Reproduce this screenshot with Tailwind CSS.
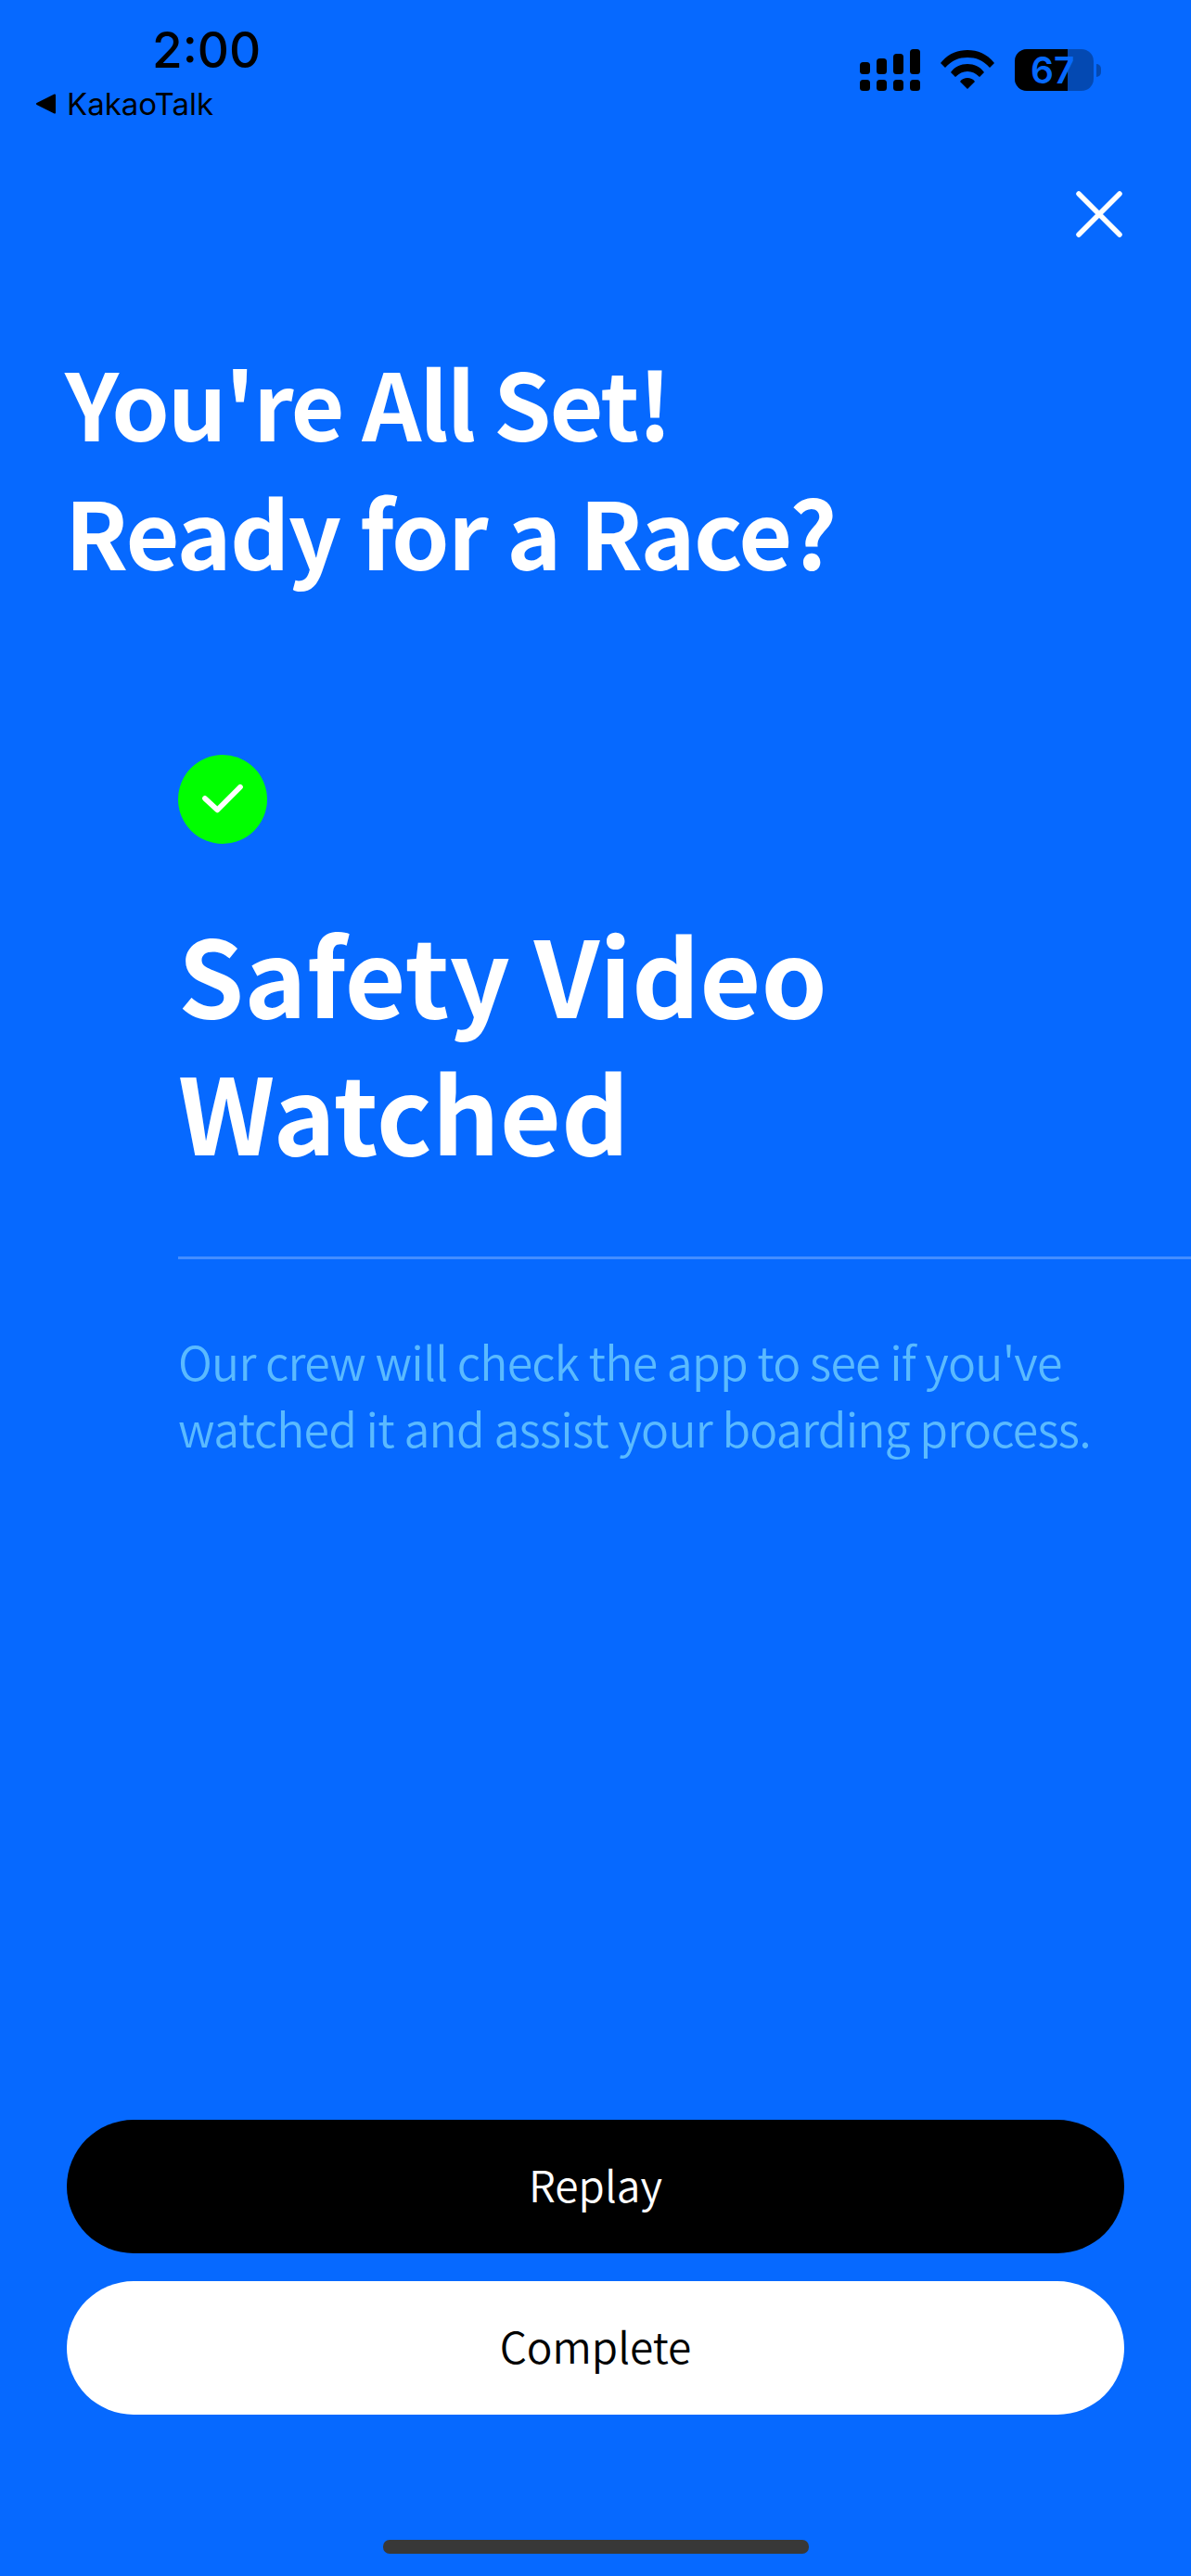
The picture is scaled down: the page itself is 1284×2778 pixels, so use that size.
<!DOCTYPE html>
<html lang="en">
<head>
  <meta charset="UTF-8">
  <meta name="viewport" content="width=device-width, initial-scale=1.0">
  <title>Safety Video Watched</title>
  <script src="https://cdn.jsdelivr.net/npm/@tailwindcss/browser@4"></script>
</head>
<body class="bg-[#0669ff]">
  <div class="w-[1284px] h-[2778px] flex flex-col overflow-hidden font-['Noto_Sans_CJK_KR','Noto_Sans',sans-serif]">

    <!-- status bar -->
    <div class="h-[146px] flex justify-between shrink-0 font-['Inter',sans-serif] text-black">
      <div class="pl-[38px] pt-[26px]">
        <div class="pl-[126px] text-[53px] leading-[56px] font-medium">2:00</div>
        <div class="flex items-center gap-[10px] mt-[12px]">
          <svg width="24" height="22" viewBox="0 0 24 22"><path d="M21 1.5 L2 11 L21 20.5 Z" fill="#000" stroke="#000" stroke-width="2" stroke-linejoin="round"/></svg>
          <span class="text-[33px] leading-[36px]">KakaoTalk</span>
        </div>
      </div>
      <div class="flex items-start gap-[21px] pt-[53px] pr-[97px]">
        <svg width="66" height="46" viewBox="0 0 66 46" fill="#000" class="-ml-[2px]">
          <rect x="0" y="14" width="11" height="13" rx="3.5"/>
          <rect x="18" y="10" width="11" height="17" rx="3.5"/>
          <rect x="36" y="5" width="11" height="22" rx="3.5"/>
          <rect x="54" y="0" width="11" height="27" rx="3.5"/>
          <rect x="0" y="33" width="11" height="12" rx="3.5"/>
          <rect x="18" y="33" width="11" height="12" rx="3.5"/>
          <rect x="36" y="33" width="11" height="12" rx="3.5"/>
          <rect x="54" y="33" width="11" height="12" rx="3.5"/>
        </svg>
        <svg width="58" height="42" viewBox="0 0 58 42" class="mt-[1px]" fill="#000">
          <path d="M29 0 C40 0 50 4 58 14 L53 19 C46 11 38 8 29 8 C20 8 12 11 5 19 L0 14 C8 4 18 0 29 0 Z"/>
          <path d="M29 15 C36 15 43 18 47 24 L42 29 C38 25 34 23 29 23 C24 23 20 25 16 29 L11 24 C15 18 22 15 29 15 Z"/>
          <path d="M29 30 C32 30 35 31 37 34 L29 42 L21 34 C23 31 26 30 29 30 Z"/>
        </svg>
        <div class="flex items-center gap-[3px] ml-[1px]">
          <div class="relative w-[85px] h-[45px] rounded-[13px] bg-black/30 overflow-hidden">
            <div class="absolute inset-y-0 left-0 w-[57px] bg-black"></div>
            <div class="absolute inset-0 pl-[17px] text-[#0669ff] text-[39px] leading-[45px] font-semibold">67</div>
          </div>
          <div class="w-[5px] h-[14px] rounded-r-full bg-black/30"></div>
        </div>
      </div>
    </div>

    <!-- close -->
    <div class="flex justify-end pr-[74px] pt-[60px] shrink-0">
      <svg width="50" height="50" viewBox="0 0 50 50" fill="none" stroke="#fff" stroke-width="5.5" stroke-linecap="round"><path d="M3 3 L47 47 M47 3 L3 47"/></svg>
    </div>

    <h1 class="pl-[70px] mt-[107px] text-white text-[100px] leading-[139px] font-bold tracking-[-1.6px] shrink-0"><span class="tracking-[-2px]">You're All Set!</span><br>Ready for a Race?</h1>

    <div class="pl-[192px] mt-[173px] shrink-0">
      <div class="w-[96px] h-[96px] rounded-full bg-[#00ff00] flex items-center justify-center">
        <svg width="46" height="38" viewBox="0 0 48 40" fill="none" stroke="#fff" stroke-width="6" stroke-linecap="round" stroke-linejoin="round"><path d="M4 19 L18 32 L44 6"/></svg>
      </div>
      <h2 class="mt-[65px] text-white text-[114px] leading-[148px] font-bold">Safety Video<br>Watched</h2>
      <div class="h-[3px] bg-white/25 mt-[84px]"></div>
      <p class="mt-[73px] text-[#5abaff] text-[50px] leading-[72px] font-[350] tracking-[-0.76px]">Our crew will check the app to see if you've<br>watched it and assist your boarding process.</p>
    </div>

    <!-- buttons -->
    <div class="mt-auto px-[72px] flex flex-col gap-[30px] shrink-0">
      <button class="h-[144px] pb-[5px] rounded-full bg-black text-white text-[46px] font-[350]">Replay</button>
      <button class="h-[144px] pb-[5px] rounded-full bg-white text-black text-[46px] font-[350]">Complete</button>
    </div>

    <div class="flex justify-center pt-[135px] pb-[24px] shrink-0">
      <div class="w-[459px] h-[15px] rounded-[7px] bg-[#383838]"></div>
    </div>
  </div>
</body>
</html>
